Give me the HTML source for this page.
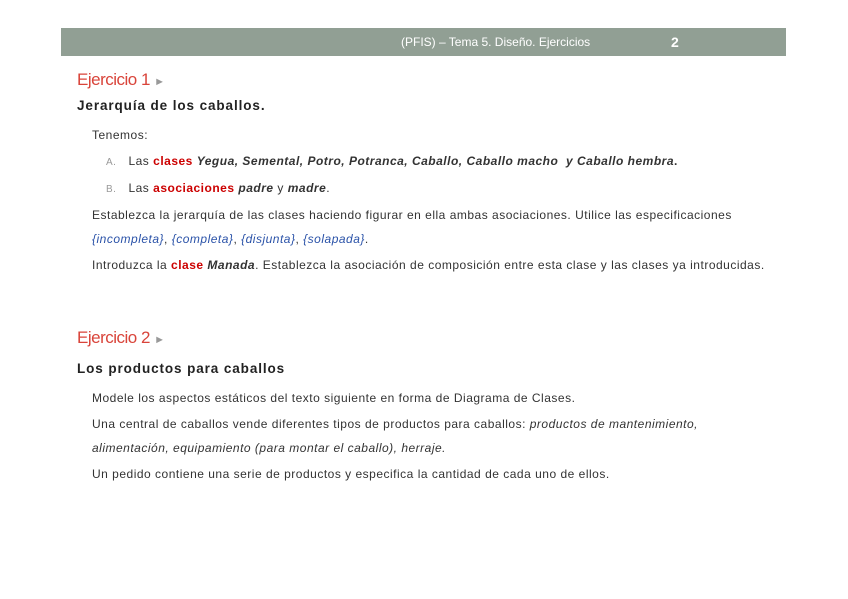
<!DOCTYPE html>
<html><head><meta charset="utf-8"><style>
body{margin:0;width:848px;height:599px;background:#fff;position:relative;font-family:"Liberation Sans",sans-serif;color:#333;overflow:hidden}
.bar{position:absolute;left:61px;top:28px;width:725px;height:28px;background:#919f94}
.t{position:absolute;white-space:nowrap;font-size:12px;letter-spacing:0.5px}
.h{color:#d9443a;font-size:17px;letter-spacing:-0.5px}
.h span{color:#999;font-size:11px}
.s{font-weight:bold;font-size:13.5px;letter-spacing:0.9px;color:#222}
.r{color:#c00;font-weight:bold}
.b{color:#2a52a8;font-style:italic}
.li{color:#999;font-size:10px;margin-right:12px}
</style></head><body>
<div class="bar"></div>
<div class="t" style="left:401px;top:35px;color:#fff;font-size:12px;letter-spacing:0">(PFIS) – Tema 5. Diseño. Ejercicios</div>
<div class="t" style="left:671px;top:34px;color:#fff;font-weight:bold;font-size:14px">2</div>
<div class="t h" style="left:77px;top:70px">Ejercicio 1 <span>►</span></div>
<div class="t s" style="left:77px;top:98px">Jerarquía de los caballos.</div>
<div class="t" style="left:92px;top:128px">Tenemos:</div>
<div class="t" style="left:106px;top:154px"><span class="li">A.</span>Las <span class="r">clases</span> <b><i>Yegua, Semental, Potro, Potranca, Caballo, Caballo macho&nbsp; y Caballo hembra</i>.</b></div>
<div class="t" style="left:106px;top:181px"><span class="li">B.</span>Las <span class="r">asociaciones</span> <b><i>padre</i></b> y <b><i>madre</i></b>.</div>
<div class="t" style="left:92px;top:208px">Establezca la jerarquía de las clases haciendo figurar en ella ambas asociaciones. Utilice las especificaciones</div>
<div class="t" style="left:92px;top:232px"><span class="b">{incompleta}</span>, <span class="b">{completa}</span>, <span class="b">{disjunta}</span>, <span class="b">{solapada}</span>.</div>
<div class="t" style="left:92px;top:258px">Introduzca la <span class="r">clase</span> <b><i>Manada</i></b>. Establezca la asociación de composición entre esta clase y las clases ya introducidas.</div>
<div class="t h" style="left:77px;top:328px">Ejercicio 2 <span>►</span></div>
<div class="t s" style="left:77px;top:361px">Los productos para caballos</div>
<div class="t" style="left:92px;top:391px">Modele los aspectos estáticos del texto siguiente en forma de Diagrama de Clases.</div>
<div class="t" style="left:92px;top:417px">Una central de caballos vende diferentes tipos de productos para caballos: <i>productos de mantenimiento,</i></div>
<div class="t" style="left:92px;top:441px"><i>alimentación, equipamiento (para montar el caballo), herraje.</i></div>
<div class="t" style="left:92px;top:467px">Un pedido contiene una serie de productos y especifica la cantidad de cada uno de ellos.</div>
</body></html>
